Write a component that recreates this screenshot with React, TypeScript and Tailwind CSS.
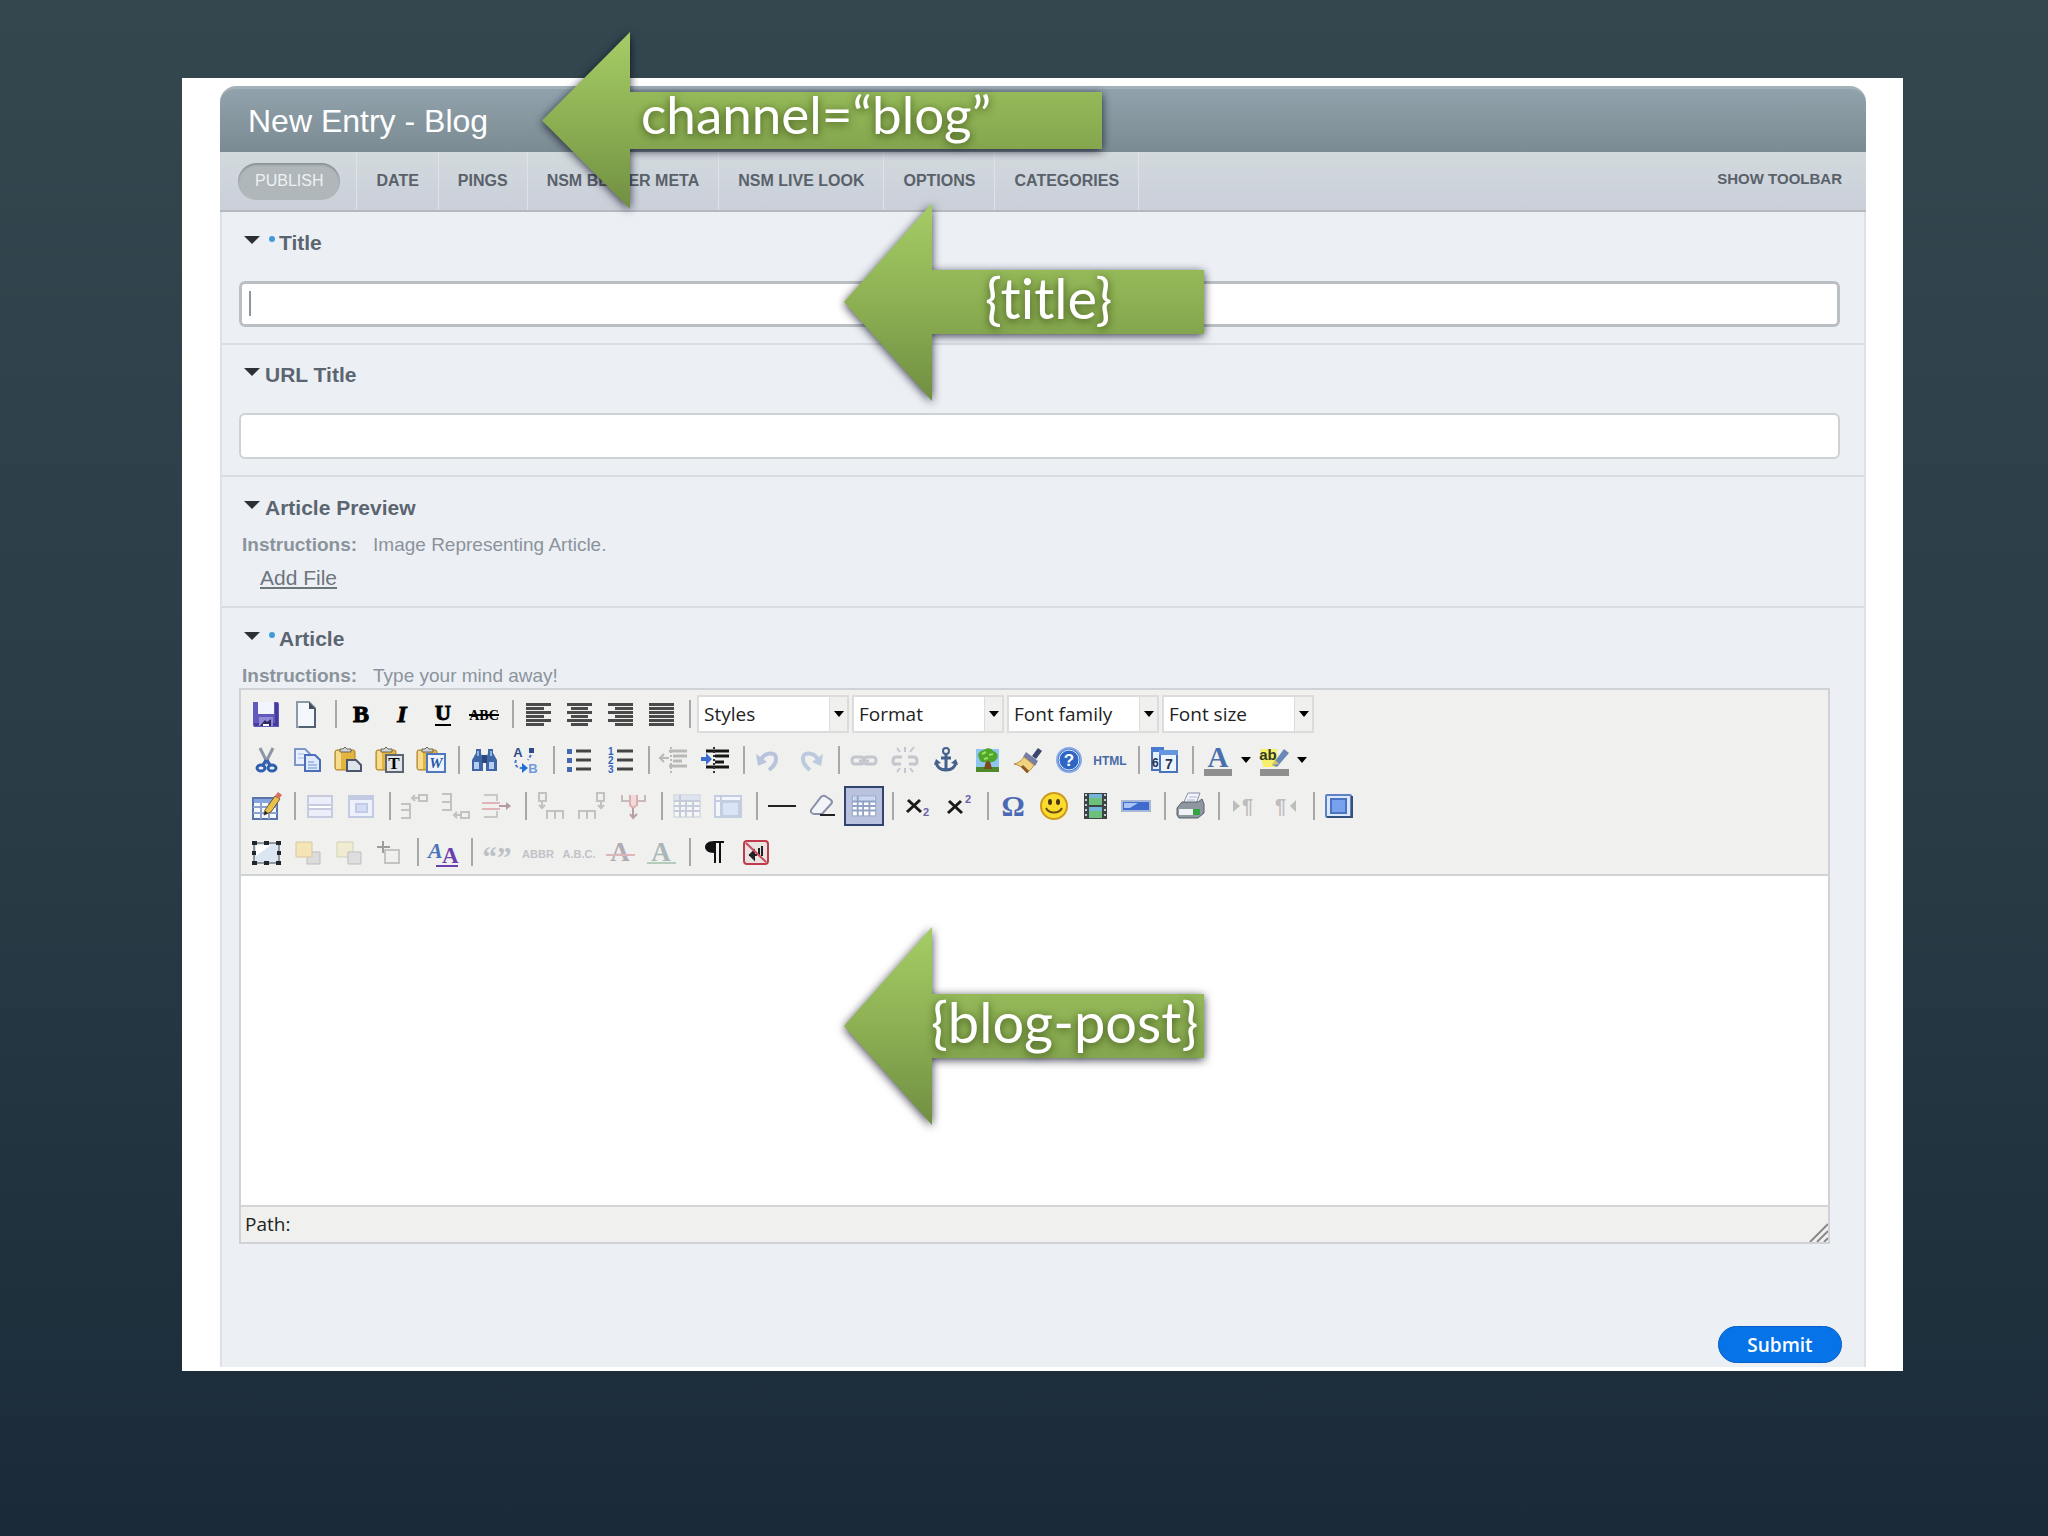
import type { ReactNode } from "react"

const serif = "'Liberation Serif', serif"
const sans = "'Liberation Sans', sans-serif"

const lines = (xs: number[][], color = "#4a4a4a") =>
  xs.map(([x, w], i) => <rect key={i} x={x} y={9 + i * 4} width={w} height="3" fill={color} />)

const sheet = (x: number, y: number, w = 17, h = 18, fill = "#eaf1fc", stroke = "#7d97c8") => (
  <path d={`M${x} ${y}h${w - 5}l5 5v${h - 5}h-${w}z`} fill={fill} stroke={stroke} strokeWidth="2" />
)

const clipboard = (
  <g>
    <rect x="7" y="10" width="20" height="20" rx="2" fill="#e3b440" stroke="#a87f2a" strokeWidth="1" />
    <path d="M8 11h5v18H8z" fill="#f6dc8c" />
    <path d="M12 12V9h3l2-2 2 2h4v3z" fill="#cfd3da" stroke="#6c6650" strokeWidth="1" />
  </g>
)

const grid = (
  <g>
    <rect x="7" y="9" width="26" height="22" fill="#fff" stroke="#8fa1c4" strokeWidth="1" />
    <path d="M8 10h24v5H8z" fill="#c9d7f2" />
    <path d="M7 15h26M7 20h26M7 25h26M13 9v22M19 15v16M26 15v16" stroke="#8fa1c4" strokeWidth="2" />
  </g>
)

const icons: Record<string, ReactNode> = {
  Save: (
    <g>
      <path d="M7 8h25l1 2v23H8l-1-2z" fill="#6258bd" />
      <path d="M29 9h3v23H8v-3h21z" fill="#453c9c" />
      <path d="M12 8h16v12H12z" fill="#f2f4ff" />
      <path d="M13 23h14v9H13z" fill="#8f8bd6" />
      <path d="M14 32l5-6 2 2 4-3v7z" fill="#2f2960" />
      <path d="M17 30h6v2h-6z" fill="#fff" />
    </g>
  ),
  "New document": (
    <g>
      <path d="M10 8h12l6 6v19H10z" fill="#f4f8fc" stroke="#8c99a8" strokeWidth="2" />
      <path d="M22 8v7h7z" fill="#45505e" />
      <path d="M28 15v18H12" fill="none" stroke="#536070" strokeWidth="2" />
    </g>
  ),
  Bold: <text x="20" y="28" textAnchor="middle" fontFamily={serif} fontSize="24" fontWeight="700" stroke="#000" strokeWidth="1">B</text>,
  Italic: <text x="20" y="28" textAnchor="middle" fontFamily={serif} fontSize="24" fontWeight="700" fontStyle="italic" stroke="#000" strokeWidth="1">I</text>,
  Underline: (
    <g>
      <text x="20" y="26" textAnchor="middle" fontFamily={serif} fontSize="22" fontWeight="700" stroke="#000" strokeWidth="1">U</text>
      <path d="M12 31h16" stroke="#000" strokeWidth="2" />
    </g>
  ),
  Strikethrough: (
    <g>
      <text x="20" y="26" textAnchor="middle" fontFamily={serif} fontSize="14" fontWeight="700">ABC</text>
      <path d="M5 21h30" stroke="#000" strokeWidth="2" />
    </g>
  ),
  "Align left": lines([[8, 25], [8, 18], [8, 25], [8, 18], [8, 25], [8, 18]]),
  "Align center": lines([[8, 25], [12, 17], [8, 25], [12, 17], [8, 25], [12, 17]]),
  "Align right": lines([[8, 25], [15, 18], [8, 25], [15, 18], [8, 25], [15, 18]]),
  "Align full": lines([[8, 25], [8, 25], [8, 25], [8, 25], [8, 25], [8, 25]]),
  Cut: (
    <g fill="none">
      <path d="M14 8l8 16M27 8l-8 16" stroke="#8d96a3" strokeWidth="3" />
      <path d="M20 20l-3 5M21 20l3 5" stroke="#2f5fb0" strokeWidth="3" />
      <ellipse cx="15" cy="28" rx="4" ry="3" stroke="#2f5fb0" strokeWidth="3" />
      <ellipse cx="26" cy="28" rx="4" ry="3" stroke="#2f5fb0" strokeWidth="3" />
    </g>
  ),
  Copy: (
    <g>
      {sheet(8, 9, 15, 16)}
      <path d="M11 14h6M11 18h9" stroke="#9db6e4" strokeWidth="1" />
      {sheet(18, 15, 15, 16, "#dfeafc", "#4a6fb8")}
      <path d="M21 22h6M21 25h9M21 28h9" stroke="#6d91d6" strokeWidth="1" />
    </g>
  ),
  Paste: <g>{clipboard}{sheet(19, 20, 14, 11, "#dfe3ea", "#4c566a")}</g>,
  "Paste as text": (
    <g>
      {clipboard}
      <rect x="17" y="15" width="17" height="17" fill="#e1e5ea" stroke="#5c6672" strokeWidth="2" />
      <text x="25" y="29" textAnchor="middle" fontFamily={serif} fontSize="17" fontWeight="700">T</text>
    </g>
  ),
  "Paste from Word": (
    <g>
      {clipboard}
      <rect x="17" y="14" width="18" height="18" fill="#eef4ff" stroke="#4f78bd" strokeWidth="2" />
      <text x="26" y="28" textAnchor="middle" fontFamily={serif} fontSize="15" fontWeight="700" fontStyle="italic" fill="#2a55a5">W</text>
    </g>
  ),
  Find: (
    <g>
      <path d="M12 9h5v4l2 6v12H8V20l4-7zM24 9h5v4l4 7v11H22V19l2-6z" fill="#3f66a6" />
      <path d="M18 15h5v8h-5z" fill="#28487e" />
      <path d="M10 22h5v7h-5zM25 22h5v7h-5z" fill="#b5d0ee" />
      <path d="M13 11h2v5h-2zM26 11h2v5h-2z" fill="#8fb2e0" />
    </g>
  ),
  Replace: (
    <g>
      <text x="13" y="17" textAnchor="middle" fontFamily={sans} fontSize="13" fontWeight="700" fill="#2d4c8c">A</text>
      <text x="28" y="33" textAnchor="middle" fontFamily={sans} fontSize="13" fontWeight="700" fill="#7199dd">B</text>
      <rect x="24" y="8" width="5" height="5" fill="#2d4c8c" />
      <path d="M26 15l-3 5M11 20c-2 5 1 8 6 8" fill="none" stroke="#4576cf" strokeWidth="2" strokeDasharray="3 2" />
      <path d="M17 23l6 5-6 5z" fill="#1f6fd6" />
    </g>
  ),
  "Bullet list": (
    <g>
      <path d="M17 11h15M17 20h15M17 29h15" stroke="#444" strokeWidth="3" />
      <path d="M8 9h5v5H8zM8 18h5v5H8zM8 27h5v5H8z" fill="#4568b4" />
    </g>
  ),
  "Numbered list": (
    <g>
      <path d="M17 11h16M17 20h16M17 29h16" stroke="#444" strokeWidth="3" />
      <g fontFamily={sans} fontSize="10" fontWeight="700" fill="#2f62be">
        <text x="8" y="15">1</text><text x="8" y="24">2</text><text x="8" y="33">3</text>
      </g>
    </g>
  ),
  Outdent: (
    <g stroke="#b9b9b9" fill="none">
      <path d="M15 11h18M19 16h14M19 21h9M15 26h18" strokeWidth="3" />
      <path d="M17 7v26" strokeWidth="2" strokeDasharray="2 2" />
      <path d="M6 18h9M10 14l-4 4 4 4" strokeWidth="2" />
    </g>
  ),
  Indent: (
    <g>
      <path d="M11 11h23M20 16h14M20 22h9M11 27h23" stroke="#161616" strokeWidth="3" />
      <path d="M19 7v26" stroke="#333" strokeWidth="2" strokeDasharray="2 2" />
      <path d="M6 17h5v-4l6 6-6 6v-4H6z" fill="#3d6cd0" />
    </g>
  ),
  Undo: (
    <g fill="none" stroke="#b9c3dd" strokeWidth="4">
      <path d="M12 20c3-8 16-9 15-1 0 5-3 8-7 11" />
      <path d="M7 14l2 12 9-4z" fill="#b9c3dd" stroke="none" />
    </g>
  ),
  Redo: (
    <g fill="none" stroke="#bccadd" strokeWidth="4">
      <path d="M28 20c-3-8-16-9-15-1 0 5 3 8 7 11" />
      <path d="M33 14l-2 12-9-4z" fill="#bccadd" stroke="none" />
    </g>
  ),
  Link: (
    <g fill="none" stroke="#c3c6cc" strokeWidth="3">
      <rect x="8" y="17" width="12" height="7" rx="3" />
      <rect x="20" y="17" width="12" height="7" rx="3" />
      <path d="M15 21h10" />
    </g>
  ),
  Unlink: (
    <g fill="none" stroke="#c3c6cc" strokeWidth="3">
      <path d="M17 17h-6q-3 0-3 4t3 3h5M23 17h6q3 0 3 4t-3 3h-5" />
      <path d="M15 12l-3-4M20 12V7M25 12l4-5M15 28l-3 4M20 28v5M25 28l3 4" strokeWidth="2" />
    </g>
  ),
  Anchor: (
    <g fill="none" stroke="#44608c" strokeWidth="3">
      <circle cx="20" cy="11" r="3" strokeWidth="2" />
      <path d="M20 14v16M15 18h10M10 22c1 6 5 8 10 8s9-2 10-8" />
      <path d="M8 25l2-6 5 4zM32 25l-2-6-5 4z" fill="#44608c" stroke="none" />
    </g>
  ),
  Image: (
    <g>
      <path d="M9 9h23v22H9z" fill="#8fc6f0" />
      <path d="M9 27h23v5H9z" fill="#4f8a2a" />
      <path d="M19 21h4l2 8h-8z" fill="#7b4a1e" />
      <path d="M12 18c-3-5 3-8 5-8 3-3 8-2 9 1 5 1 6 6 3 9-3 3-6 2-8 1-3 2-8 2-9-3z" fill="#4fa62a" />
      <path d="M15 14l4-2M22 15l4-1M17 19l4-1" stroke="#9be05a" strokeWidth="2" />
    </g>
  ),
  Cleanup: (
    <g>
      <path d="M24 16l6-8 4 3-6 8z" fill="#3c466e" />
      <path d="M18 12l12 9-3 5-12-9z" fill="#777fa6" />
      <path d="M16 17l10 8c-2 4-5 6-7 8-3-4-7-8-13-9 5-1 8-4 10-7z" fill="#f0d380" stroke="#b88b3c" strokeWidth="1" />
      <path d="M14 26l6 6" stroke="#8a5a22" strokeWidth="3" />
    </g>
  ),
  Help: (
    <g>
      <circle cx="20" cy="20" r="12" fill="#2f66c4" stroke="#86aae6" strokeWidth="2" />
      <circle cx="20" cy="20" r="10" fill="none" stroke="#e6f0ff" strokeWidth="1" />
      <text x="20" y="26" textAnchor="middle" fontFamily={sans} fontSize="17" fontWeight="700" fill="#fff">?</text>
    </g>
  ),
  "Edit HTML": <text x="20" y="25" textAnchor="middle" fontFamily={sans} fontSize="12" fontWeight="700" fill="#4a6aa8">HTML</text>,
  "Insert date": (
    <g>
      <path d="M8 8h11v22H8z" fill="#e5eefc" stroke="#4a72b8" strokeWidth="2" />
      <path d="M7 7h13v5H7z" fill="#4a79d0" />
      <path d="M16 11h17v21H16z" fill="#eef4ff" stroke="#4a72b8" strokeWidth="2" />
      <path d="M15 10h19v5H15z" fill="#6796e0" />
      <g fontFamily={sans} fontSize="14" fontWeight="700" fill="#26344e">
        <text x="8" y="27" fontSize="12">6</text><text x="21" y="29">7</text>
      </g>
    </g>
  ),
  "Text color": (
    <g>
      <text x="20" y="27" textAnchor="middle" fontFamily={serif} fontSize="29" fontWeight="700" fill="#4a6fae">A</text>
      <path d="M6 29h28v7H6z" fill="#8f8f8f" />
    </g>
  ),
  "Background color": (
    <g>
      <path d="M6 9h17v18H9z" fill="#f5ef6a" />
      <path d="M18 25l12-16 5 4-12 14z" fill="#6a88b8" />
      <path d="M18 25l3-5 4 4z" fill="#d9c36a" />
      <text x="14" y="20" textAnchor="middle" fontFamily={sans} fontSize="15" fontWeight="700" fill="#333a22">ab</text>
      <path d="M6 29h29v7H6z" fill="#8f8f8f" />
    </g>
  ),
  Table: (
    <g>
      <rect x="7" y="12" width="24" height="21" fill="#f5f8ff" stroke="#5a74aa" strokeWidth="2" />
      <path d="M8 13h22v4H8z" fill="#86a6e2" />
      <path d="M7 21h24M7 27h24M15 17v16M23 17v16" stroke="#8ea4cf" strokeWidth="2" />
      <path d="M19 24l10-14 5 3-9 13-7 3z" fill="#e8c04a" stroke="#6a5a3a" strokeWidth="1" />
      <path d="M29 10l3-4 4 3-3 4z" fill="#d9705f" />
      <path d="M18 29l1-4 3 2z" fill="#222" />
    </g>
  ),
  "Row properties": (
    <g stroke="#c6cbe0" strokeWidth="2" fill="#eceffa">
      <path d="M8 10h24v21H8z" /><path d="M8 19h24v4H8z" fill="#fff" />
    </g>
  ),
  "Cell properties": (
    <g stroke="#c3cbe2" strokeWidth="2" fill="#eef1fb">
      <path d="M8 10h24v21H8z" /><path d="M8 12h24" strokeWidth="4" />
      <path d="M15 18h11v8H15z" fill="#d3ddf4" />
    </g>
  ),
  "Insert row before": (
    <g fill="none" stroke="#c2c2c2" strokeWidth="2">
      <path d="M6 18h9v6H6M6 24h9v8H6" /><path d="M32 9h-8v6h8zM24 12h-7M20 9l-3 3 3 3" />
    </g>
  ),
  "Insert row after": (
    <g fill="none" stroke="#c2c2c2" strokeWidth="2">
      <path d="M6 8h9v8H6M6 24h9v-8" /><path d="M33 26h-8v6h8zM25 29h-7M21 26l-3 3 3 3" />
    </g>
  ),
  "Delete row": (
    <g fill="none" strokeWidth="2">
      <path d="M7 9h13v6M7 31h13v-6" stroke="#c8c8c8" />
      <path d="M5 17h18M5 23h18" stroke="#e0b4b8" /><path d="M22 20h10" stroke="#b59aa0" />
      <path d="M29 16l5 4-5 4z" fill="#b59aa0" />
    </g>
  ),
  "Insert column before": (
    <g fill="none" stroke="#c2c2c2" strokeWidth="2">
      <path d="M8 7h7v8H8zM11 15v6M8 19l3 3 3-3" /><path d="M16 33v-8h8v8M24 25h8v8" />
    </g>
  ),
  "Insert column after": (
    <g fill="none" stroke="#c2c2c2" strokeWidth="2">
      <path d="M25 7h7v8h-7zM29 15v6M26 19l3 3 3-3" /><path d="M7 33v-8h8v8M15 25h8v8" />
    </g>
  ),
  "Delete column": (
    <g fill="none" strokeWidth="2">
      <path d="M9 9v6h7M32 9v6h-7" stroke="#c9b9b9" />
      <path d="M17 9v10l3 3 4-3V9" stroke="#dcaeb0" fill="#f1dcdc" /><path d="M20 22v9M17 28l3 4 4-4" stroke="#b99fa2" />
    </g>
  ),
  "Split cells": <g opacity="0.45">{grid}</g>,
  "Merge cells": (
    <g stroke="#c4cee2" strokeWidth="2" fill="#f4f6fb">
      <path d="M7 10h26v21H7zM13 10v21" /><path d="M7 15h26" /><path d="M14 16h17v14H14z" fill="#dbe4f7" />
    </g>
  ),
  "Horizontal rule": <path d="M6 20h28" stroke="#222" strokeWidth="2" />,
  "Remove formatting": (
    <g>
      <path d="M8 24l10-13q2-2 4-1l6 4q2 2 0 4l-9 10h-8q-4-1-3-4z" fill="#f2f4fa" stroke="#8890a8" strokeWidth="2" />
      <path d="M17 29h15" stroke="#222" strokeWidth="2" />
    </g>
  ),
  "Toggle guidelines": grid,
  Subscript: (
    <g fontFamily={sans} fontWeight="700">
      <path d="M10 14l13 12M22 14L9 26" stroke="#1a1a1a" strokeWidth="3" />
      <text x="25" y="30" fontSize="11" fill="#6a62a8">2</text>
    </g>
  ),
  Superscript: (
    <g fontFamily={sans} fontWeight="700">
      <path d="M10 15l13 12M22 15L9 27" stroke="#1a1a1a" strokeWidth="3" />
      <text x="26" y="17" fontSize="11" fill="#6a62a8">2</text>
    </g>
  ),
  "Special character": <text x="20" y="30" textAnchor="middle" fontFamily={serif} fontSize="29" fontWeight="700" fill="#4a69b4">Ω</text>,
  Emotions: (
    <g>
      <circle cx="20" cy="20" r="13" fill="#f9dc2e" stroke="#cf9a1c" strokeWidth="2" />
      <ellipse cx="16" cy="16" rx="2" ry="3" fill="#4a3510" />
      <ellipse cx="24" cy="16" rx="2" ry="3" fill="#4a3510" />
      <path d="M12 22c3 6 13 6 16 0" fill="none" stroke="#6a4a10" strokeWidth="2" />
    </g>
  ),
  "Embedded media": (
    <g>
      <path d="M9 7h23v26H9z" fill="#3c4448" />
      <path d="M14 8h13v11H14zM14 21h13v11H14z" fill="#6cc07c" />
      <path d="M14 8h13v4H14zM14 21h13v4H14z" fill="#74b6d8" />
      <path d="M11 8v25M30 8v25" stroke="#c6d0d0" strokeWidth="2" strokeDasharray="2 3" />
    </g>
  ),
  "Advanced rule": (
    <g>
      <path d="M6 15h28v10H6z" fill="#3f6bd0" stroke="#a9b7d6" strokeWidth="2" />
      <path d="M8 17h14l-8 5H8z" fill="#a9c4f6" />
    </g>
  ),
  Print: (
    <g>
      <path d="M13 18l5-11h12l-4 11z" fill="#f3f5fb" stroke="#8790a6" strokeWidth="1" />
      <path d="M7 22l5-6h16l4-3 2 5v9l-6 5H9l-2-3z" fill="#8e979e" stroke="#56606a" strokeWidth="1" />
      <path d="M9 23h15v6H9z" fill="#eef2f4" />
      <path d="M23 23h7v6h-7z" fill="#35a341" />
      <path d="M19 11h8M17 14h8" stroke="#aab6d0" strokeWidth="1" />
    </g>
  ),
  "Left to right": (
    <g fill="#bdbdbd">
      <path d="M9 14l7 6-7 6z" /><text x="18" y="27" fontFamily={sans} fontSize="20" fontWeight="700">¶</text>
    </g>
  ),
  "Right to left": (
    <g fill="#bdbdbd">
      <path d="M31 14l-6 6 6 6z" /><text x="10" y="27" fontFamily={sans} fontSize="20" fontWeight="700">¶</text>
    </g>
  ),
  "Full screen": (
    <g>
      <rect x="7" y="9" width="25" height="22" rx="1" fill="#dbe7fb" stroke="#5f82c4" strokeWidth="2" />
      <path d="M8 31h25V10" fill="none" stroke="#34507f" strokeWidth="2" />
      <rect x="12" y="13" width="15" height="14" fill="#78a2ee" stroke="#4a73c4" strokeWidth="2" />
    </g>
  ),
  "Insert layer": (
    <g>
      <path d="M8 11h25v20H8z" fill="#dbe6f2" stroke="#3d4650" strokeWidth="1" />
      <path d="M10 13h15L10 24z" fill="#fff" />
      <path d="M6 9h5v4H6zM18 9h5v4h-5zM30 9h5v4h-5zM6 19h4v4H6zM31 19h4v4h-4zM6 29h5v4H6zM18 29h5v4h-5zM30 29h5v4h-5z" fill="#22272c" />
    </g>
  ),
  "Move forward": (
    <g strokeWidth="1">
      <path d="M20 20h13v12H20z" fill="#dcdcdc" stroke="#bdbdbd" /><path d="M9 10h16v15H9z" fill="#f5e4b8" stroke="#d6c8a2" />
    </g>
  ),
  "Move backward": (
    <g strokeWidth="1">
      <path d="M9 10h16v15H9z" fill="#f0ecd2" stroke="#d2d0ba" /><path d="M20 20h13v12H20z" fill="#dedede" stroke="#bdbdbd" />
    </g>
  ),
  "Absolute position": (
    <g fill="none" stroke="#9c9c9c" strokeWidth="2">
      <path d="M16 18h14v13H16z" stroke="#c4c4c4" /><path d="M8 15h13M14 9v12" />
    </g>
  ),
  "Style props": (
    <g fontFamily={serif} fontWeight="700">
      <text x="5" y="26" fontSize="22" fontStyle="italic" fill="#4a72b8">A</text>
      <text x="19" y="31" fontSize="23" fill="#6a3fae">A</text>
      <path d="M13 34h22" stroke="#6a3fae" strokeWidth="2" />
    </g>
  ),
  Citation: <text x="20" y="35" textAnchor="middle" fontFamily={serif} fontSize="29" fontWeight="700" fill="#bcc0c8">“”</text>,
  Abbreviation: <text x="20" y="26" textAnchor="middle" fontFamily={sans} fontSize="11" fontWeight="700" fill="#c2c2c8">ABBR</text>,
  Acronym: <text x="20" y="26" textAnchor="middle" fontFamily={sans} fontSize="11" fontWeight="700" fill="#c2c2c8">A.B.C.</text>,
  Deletion: (
    <g>
      <text x="20" y="29" textAnchor="middle" fontFamily={serif} fontSize="27" fontWeight="700" fill="#b3abb3">A</text>
      <path d="M6 23h29" stroke="#dcb6b8" strokeWidth="2" />
    </g>
  ),
  Insertion: (
    <g>
      <text x="20" y="29" textAnchor="middle" fontFamily={serif} fontSize="27" fontWeight="700" fill="#a9b7b9">A</text>
      <path d="M6 31h29" stroke="#b4ccbc" strokeWidth="2" />
    </g>
  ),
  "Visual characters": (
    <path d="M29 9v2h-3v20h-2V11h-3v20h-2V21c-6 0-9-3-9-6s3-6 9-6z" fill="#111" />
  ),
  "Page break": (
    <g>
      <rect x="8" y="9" width="24" height="23" rx="3" fill="#e9e4e2" stroke="#c03a4c" strokeWidth="2" />
      <path d="M26 14v10M23 16v8" stroke="#222" strokeWidth="2" />
      <path d="M13 23h8M18 19l-4 4 4 4z" fill="#222" stroke="#222" strokeWidth="2" />
      <path d="M10 11l20 19" stroke="#c9485a" strokeWidth="2" />
    </g>
  ),
}

const selects = ["Styles", "Format", "Font family", "Font size"]

const rows = [
  ["Save", "New document", "|", "Bold", "Italic", "Underline", "Strikethrough", "|", "Align left", "Align center", "Align right", "Align full", "|"],
  ["Cut", "Copy", "Paste", "Paste as text", "Paste from Word", "|", "Find", "Replace", "|", "Bullet list", "Numbered list", "|", "Outdent", "Indent", "|", "Undo", "Redo", "|", "Link", "Unlink", "Anchor", "Image", "Cleanup", "Help", "Edit HTML", "|", "Insert date", "|", "Text color", "Background color"],
  ["Table", "|", "Row properties", "Cell properties", "|", "Insert row before", "Insert row after", "Delete row", "|", "Insert column before", "Insert column after", "Delete column", "|", "Split cells", "Merge cells", "|", "Horizontal rule", "Remove formatting", "Toggle guidelines", "|", "Subscript", "Superscript", "|", "Special character", "Emotions", "Embedded media", "Advanced rule", "|", "Print", "|", "Left to right", "Right to left", "|", "Full screen"],
  ["Insert layer", "Move forward", "Move backward", "Absolute position", "|", "Style props", "|", "Citation", "Abbreviation", "Acronym", "Deletion", "Insertion", "|", "Visual characters", "Page break"],
]

const tabs = ["Date", "Pings", "NSM Better Meta", "NSM Live Look", "Options", "Categories"]

function ToolButton({ name }: { name: string }) {
  const active = name === "Toggle guidelines"
  const split = name.endsWith("color")
  return (
    <>
      <button aria-label={name} className="flex h-10 w-[41px] shrink-0 items-center justify-center">
        <svg viewBox="0 0 40 40" className={active ? "size-10 border-2 border-[#33436f] bg-[#b9c3dd]" : "size-10 overflow-visible"}>
          {icons[name]}
        </svg>
      </button>
      {split && (
        <button aria-label={`${name} menu`} className="flex h-10 w-[15px] shrink-0 items-center justify-center">
          <svg viewBox="0 0 10 6" className="h-[6px] w-[10px]">
            <path d="M0 0h10L5 6z" />
          </svg>
        </button>
      )}
    </>
  )
}

function ToolSelect({ name }: { name: string }) {
  return (
    <div className="relative ml-[3px] h-[38px] w-[152px] border-2 border-[#dcdcdc] bg-white">
      <select aria-label={name} className="size-full appearance-none pl-[5px] font-['Open_Sans',sans-serif] text-[19px] leading-6 text-[#222]">
        <option>{name}</option>
      </select>
      <span className="pointer-events-none absolute inset-y-0 right-0 flex w-[18px] items-center justify-center border-l border-[#dcdcdc] bg-[#f0f0ee]">
        <svg viewBox="0 0 10 6" className="h-[6px] w-[10px]">
          <path d="M0 0h10L5 6z" />
        </svg>
      </span>
    </div>
  )
}

function FieldLabel({ children, required, htmlFor }: { children: ReactNode; required?: boolean; htmlFor?: string }) {
  return (
    <label htmlFor={htmlFor} className="flex items-center pl-[5px] text-[21px] leading-6 font-bold text-[#5b6570]">
      <svg viewBox="0 0 16 8" className="mr-[5px] mb-[6px] h-2 w-4">
        <path d="M0 0h16L8 8z" fill="#2a3035" />
      </svg>
      {required && <span className="mx-1 mb-2 size-[6px] rounded-sm bg-[#3f9bd8]" />}
      {children}
    </label>
  )
}

function Instructions({ children }: { children: ReactNode }) {
  return (
    <p className="mt-[13px] flex gap-4 pl-[3px] text-[19px] leading-6 text-[#8b939b]">
      <strong>Instructions:</strong>
      {children}
    </p>
  )
}

function Callout({ id, width, height, head, top, bottom, className, children }: {
  id: string; width: number; height: number; head: number; top: number; bottom: number; className: string; children: ReactNode
}) {
  return (
    <div className={`pointer-events-none absolute z-10 flex items-center ${className}`}>
      <svg viewBox={`0 0 ${width} ${height}`} className="absolute inset-0 size-full overflow-visible drop-shadow-[0_2px_5px_rgba(0,0,20,0.75)]">
        <defs>
          <linearGradient id={id} x1="0" y1="0" x2="0" y2="1">
            <stop offset="0" stopColor="#a5cd66" />
            <stop offset="0.5" stopColor="#8db053" />
            <stop offset="1" stopColor="#708f42" />
          </linearGradient>
        </defs>
        <path d={`M0 ${height / 2}L${head} 0V${top}H${width}V${bottom}H${head}V${height}z`} fill={`url(#${id})`} />
      </svg>
      <span className="relative font-['Lato',sans-serif] leading-[60px] whitespace-nowrap text-white [font-variant-ligatures:none] [text-shadow:0_2px_8px_rgba(30,45,0,0.7)]">
        {children}
      </span>
    </div>
  )
}

export default function App() {
  return (
    <div className="min-h-screen bg-linear-to-b from-[#34474f] via-[#2a3d46] to-[#1a2a39] pt-[78px] pr-[145px] pb-20 pl-[182px] font-['Liberation_Sans',sans-serif]">
      <main className="bg-white pt-2 pr-[37px] pb-1 pl-[38px]">
        <header className="relative flex h-[66px] items-center rounded-t-2xl border-t-3 border-[#a3b1b9] bg-linear-to-b from-[#91a2ac] to-[#7b8b93] pl-7">
          <h1 className="text-[32px] text-white">New Entry - Blog</h1>
          <Callout id="channel" width={560} height={177} head={88} top={60} bottom={117} className="-top-[57px] left-[322px] h-[177px] w-[560px] pb-[14px] pl-[99px] text-[53px]">
            channel=“blog”
          </Callout>
        </header>

        <nav className="flex h-[60px] items-stretch border-b-2 border-[#b4b9be] bg-linear-to-b from-[#d2dadd] to-[#cacfd9] pl-[18px] text-base text-[#59616a]">
          <button className="mr-4 h-[37px] self-center rounded-full bg-[#b0b7bb] px-[17px] text-[#eef1f3] uppercase shadow-[inset_0_2px_2px_rgba(80,90,95,0.4)]">
            Publish
          </button>
          {tabs.map((tab) => (
            <button key={tab} className="border-l border-[#dde3e7] px-[19px] font-bold uppercase">
              {tab}
            </button>
          ))}
          <button className="flex-1 border-l border-[#dde3e7] pr-6 pb-1 text-right text-[15px] font-bold uppercase">Show toolbar</button>
        </nav>

        <div className="border-x-2 border-[#dde1e5] bg-[#ecf0f5]">
          <section className="relative border-b-2 border-[#d9dde1] pt-[19px] pr-6 pb-4 pl-[17px]">
            <FieldLabel htmlFor="title" required>Title</FieldLabel>
            <div className="relative mt-[26px]">
              <input id="title" className="block h-[46px] w-full rounded-md border-3 border-[#b9bfc2] bg-white px-2 text-xl" />
              <span className="absolute top-[10px] left-[10px] h-[25px] w-[2px] bg-[#8f959b]" />
            </div>
            <Callout id="title-arrow" width={360} height={198} head={88} top={67} bottom={131} className="-top-[9px] left-[622px] h-[198px] w-[360px] pb-2 pl-[141px] text-[56px]">
              {"{title}"}
            </Callout>
          </section>

          <section className="border-b-2 border-[#d9dde1] pt-[18px] pr-6 pb-4 pl-[17px]">
            <FieldLabel htmlFor="url-title">URL Title</FieldLabel>
            <input id="url-title" className="mt-[26px] block h-[46px] w-full rounded-md border-2 border-[#cdd2d6] bg-white px-2 text-xl" />
          </section>

          <section className="border-b-2 border-[#d9dde1] pt-[19px] pr-6 pb-4 pl-[17px]">
            <FieldLabel>Article Preview</FieldLabel>
            <Instructions>Image Representing Article.</Instructions>
            <a href="#add-file" className="mt-[9px] ml-[21px] block w-fit text-[21px] leading-6 text-[#6d757d] underline">Add File</a>
          </section>

          <section className="pt-[19px] pr-6 pb-1 pl-[17px]">
            <FieldLabel htmlFor="article" required>Article</FieldLabel>
            <Instructions>Type your mind away!</Instructions>

            <div className="relative mr-[10px] border-2 border-[#d0d3d6] bg-[#f0f0ee]">
              <div className="flex flex-col gap-[6px] border-b-2 border-[#d0d3d6] pt-1 pb-[2px] pl-1">
                {rows.map((row, i) => (
                  <div key={i} className="flex h-10 items-center">
                    {row.map((name, j) =>
                      name === "|" ? (
                        <span key={j} className="flex w-[13px] shrink-0 justify-center pl-1">
                          <span className="h-7 w-[2px] bg-[#a8a8a8]" />
                        </span>
                      ) : (
                        <ToolButton key={j} name={name} />
                      ),
                    )}
                    {i === 0 && selects.map((name) => <ToolSelect key={name} name={name} />)}
                  </div>
                ))}
              </div>
              <textarea id="article" className="block h-[329px] w-full resize-none bg-white p-3 text-xl" />
              <footer className="flex h-[37px] items-center border-t-2 border-[#d5d5d5] pl-1 font-['Open_Sans',sans-serif] text-[19px] text-[#222]">
                Path:
                <svg viewBox="0 0 20 20" className="mt-auto ml-auto size-5">
                  <path d="M2 20L20 2M9 20L20 9M16 20l4-4" stroke="#8a8a8a" strokeWidth="2" />
                </svg>
              </footer>
              <Callout id="post" width={360} height={198} head={88} top={67} bottom={131} className="top-[237px] left-[603px] h-[198px] w-[360px] pb-2 pl-[87px] text-[56px]">
                {"{blog-post}"}
              </Callout>
            </div>

            <div className="flex justify-end pt-[82px]">
              <button className="-mr-[2px] h-[37px] w-[124px] rounded-full border border-[#0a5fc4] bg-[#0673e8] font-['Open_Sans',sans-serif] text-[19px] leading-6 font-semibold text-white">
                Submit
              </button>
            </div>
          </section>
        </div>
      </main>
    </div>
  )
}
